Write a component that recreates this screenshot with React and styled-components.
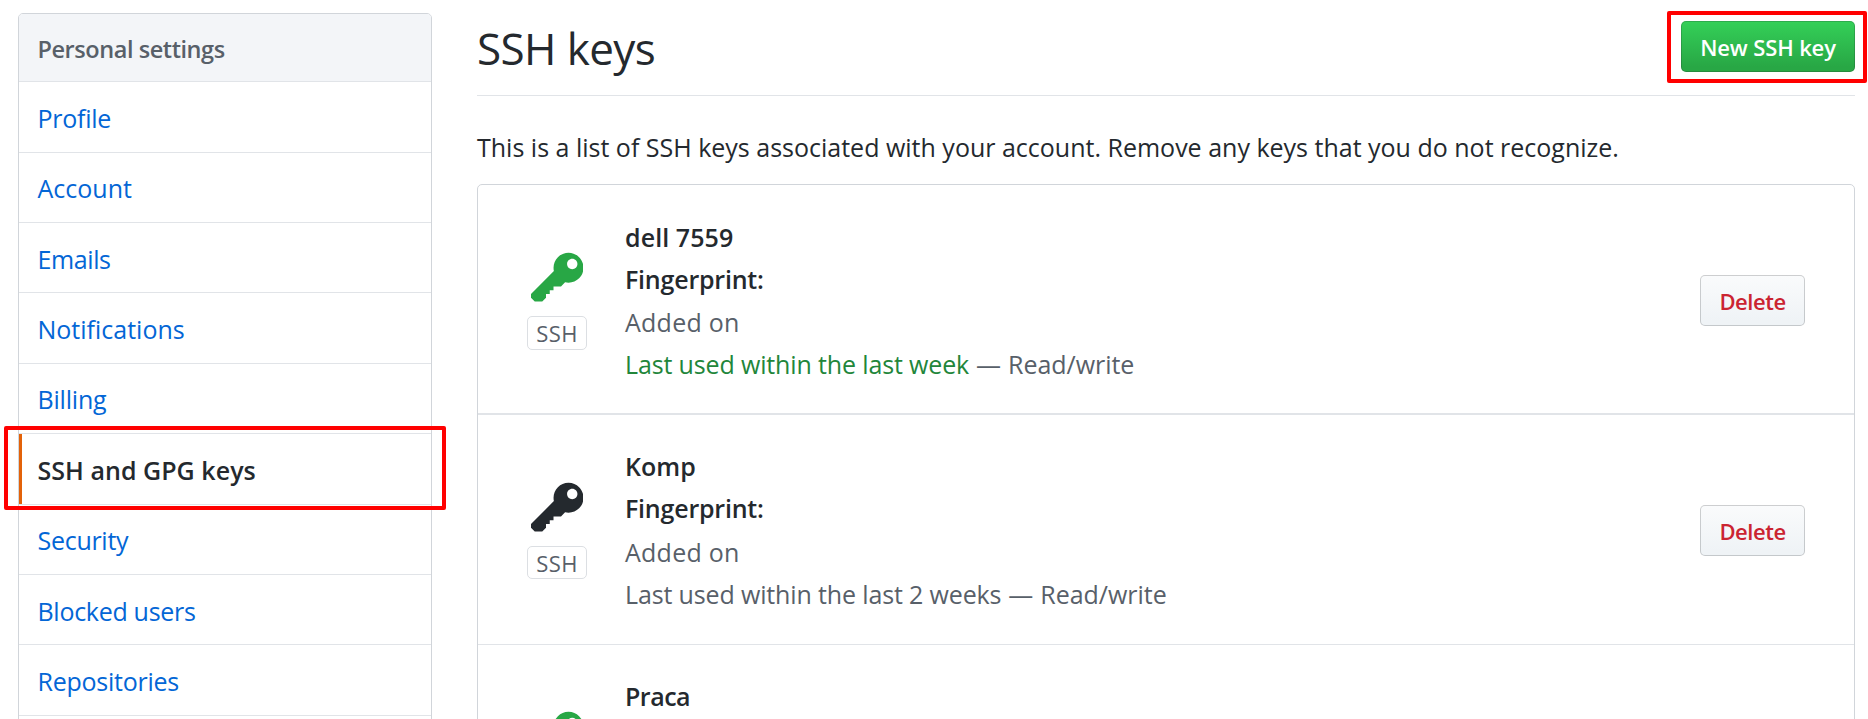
import React from "react";
import styled, { createGlobalStyle, css } from "styled-components";

const GlobalStyle = createGlobalStyle`
  *, *::before, *::after { box-sizing: border-box; }
  html, body { margin: 0; height: 719px; overflow: hidden; background: #fff; }
  body {
    font-family: "Open Sans", "Noto Sans", sans-serif;
    font-size: 25px;
    color: #24292e;
  }
`;

const Page = styled.div`
  display: flex;
  align-items: flex-start;
  gap: 45px;
  width: 1868px;
  height: 719px;
  padding: 13px 13px 0 18px;
  overflow: hidden;
`;

const Menu = styled.nav`
  flex: none;
  width: 414px;
  border: 1px solid #d1d5da;
  border-radius: 5px;
`;

const MenuHeading = styled.div`
  height: 68.2px;
  padding: 3px 0 0 18.5px;
  border-bottom: 1px solid #e1e4e8;
  border-radius: 4px 4px 0 0;
  background: #f3f5f8;
  color: #586069;
  font-size: 23.5px;
  font-weight: 600;
  letter-spacing: -0.44px;
  line-height: 64px;
`;

const highlightFrame = css`
  content: "";
  position: absolute;
  border: 4px solid #ff0000;
  border-radius: 2px;
  pointer-events: none;
`;

const MenuItem = styled.a`
  display: block;
  position: relative;
  height: 70.4px;
  padding: 1.6px 0 0 18.5px;
  border-bottom: 1px solid #e1e4e8;
  color: #0366d6;
  text-decoration: none;
  line-height: 68px;
  letter-spacing: ${(p) => p.$tracking}px;

  ${(p) =>
    p.$selected &&
    css`
      color: #24292e;
      font-weight: 600;

      &::before {
        content: "";
        position: absolute;
        inset: 0 auto 0 0;
        width: 3px;
        background: #e36209;
      }

      &::after {
        ${highlightFrame}
        inset: -8px -15px -6.6px;
      }
    `}
`;

const Main = styled.main`
  flex: 1;
  min-width: 0;
`;

const Subhead = styled.header`
  display: flex;
  justify-content: space-between;
  align-items: flex-start;
  height: 83px;
  padding-top: 8px;
  border-bottom: 1px solid #e1e4e8;
`;

const Title = styled.h1`
  margin: 0;
  font-size: 44px;
  font-weight: 400;
  line-height: 54px;
  letter-spacing: -0.6px;
`;

const ButtonHighlight = styled.div`
  position: relative;

  &::after {
    ${highlightFrame}
    inset: -10px -12px -11px -14px;
  }
`;

const Button = styled.button`
  display: block;
  height: 51px;
  padding: 0;
  border: 1px solid rgba(27, 31, 35, 0.2);
  border-radius: 5px;
  font-family: inherit;
  font-size: 22px;
  font-weight: 600;
  line-height: 48px;
  text-align: center;
`;

const PrimaryButton = styled(Button)`
  width: 174px;
  color: #fff;
  letter-spacing: -0.13px;
  background: linear-gradient(#34d058, #28a745 90%) border-box;
`;

const DangerButton = styled(Button)`
  flex: none;
  width: 105px;
  margin-top: 90px;
  color: #cb2431;
  letter-spacing: -0.46px;
  background: linear-gradient(#fafbfc, #eff3f6 90%) border-box;
`;

const Intro = styled.p`
  margin: 30px 0 16px;
  line-height: 42px;
`;

const KeyList = styled.ul`
  margin: 0;
  padding: 0;
  list-style: none;
  border: 1px solid #d1d5da;
  border-radius: 5px;
`;

const KeyRow = styled.li`
  display: flex;
  align-items: flex-start;
  height: 230px;
  padding: 0 49px;
  border-bottom: ${(p) => p.$rule}px solid #e1e4e8;
`;

const KeyMark = styled.div`
  display: flex;
  flex-direction: column;
  align-items: center;
  flex: none;
  width: 60px;
  margin-right: 38px;
  padding-top: ${(p) => p.$top}px;
  color: ${(p) => (p.$recent ? "#28a745" : "#24292e")};
`;

const KeyGlyph = styled.svg`
  display: block;
  width: 52.5px;
  height: 60px;
  fill: currentColor;
`;

const KeyBadge = styled.span`
  width: 60px;
  height: ${(p) => p.$height}px;
  margin-top: 7px;
  border: 1px solid #dcdfe3;
  border-radius: 5px;
  color: #586069;
  font-size: 22px;
  line-height: 32px;
  letter-spacing: 0.4px;
  text-align: center;
`;

const KeyDetails = styled.div`
  flex: 1;
  padding-top: ${(p) => p.$top}px;
  line-height: 42px;
`;

const KeyName = styled.strong`
  display: block;
  font-weight: 600;
  letter-spacing: ${(p) => p.$tracking}px;
`;

const Fingerprint = styled(KeyName)`
  letter-spacing: -0.21px;
`;

const Added = styled.div`
  margin-top: ${(p) => p.$gap}px;
  color: #586069;
  letter-spacing: 0.25px;
`;

const Usage = styled.div`
  color: #586069;
  letter-spacing: -0.03px;
  word-spacing: 0.5px;
`;

const LastUsed = styled.span`
  color: ${(p) => (p.$recent ? "#22863a" : "inherit")};
  letter-spacing: -0.14px;
  word-spacing: 0;
`;

const menuItems = [
  { label: "Profile", tracking: -0.25 },
  { label: "Account", tracking: 0 },
  { label: "Emails", tracking: -0.4 },
  { label: "Notifications", tracking: 0 },
  { label: "Billing", tracking: -0.2 },
  { label: "SSH and GPG keys", tracking: 0.04, selected: true },
  { label: "Security", tracking: -0.28 },
  { label: "Blocked users", tracking: -0.29 },
  { label: "Repositories", tracking: -0.25 },
];

const keys = [
  { name: "dell 7559", tracking: 0.09, used: "Last used within the last week", recent: true, rule: 2, badge: 34, markTop: 64, textTop: 31.2, gap: 1 },
  { name: "Komp", tracking: 0.02, used: "Last used within the last 2 weeks", recent: false, rule: 1, badge: 33, markTop: 64, textTop: 30.2, gap: 2 },
  { name: "Praca", tracking: -0.5, used: "Last used within the last week", recent: true, rule: 1, badge: 34, markTop: 63, textTop: 30.2, gap: 1 },
];

function KeyIcon() {
  return (
    <KeyGlyph viewBox="0 0 14 16" aria-hidden="true">
      <path
        fillRule="evenodd"
        d="M12.83 2.17C12.08 1.42 11.14 1.03 10 1c-1.13.03-2.08.42-2.83 1.17S6.04 3.86 6.01 5c0 .3.03.59.09.89L0 12v1l1 1h2l1-1v-1h1v-1h1v-1h2l1.09-1.11c.3.08.59.11.91.11 1.14-.03 2.08-.42 2.83-1.17S13.97 6.14 14 5c-.03-1.14-.42-2.08-1.17-2.83zM11 5.38c-.77 0-1.38-.61-1.38-1.38 0-.77.61-1.38 1.38-1.38.77 0 1.38.61 1.38 1.38 0 .77-.61 1.38-1.38 1.38z"
      />
    </KeyGlyph>
  );
}

export default function App() {
  return (
    <>
      <GlobalStyle />
      <Page>
        <Menu>
          <MenuHeading>Personal settings</MenuHeading>
          {menuItems.map((item) => (
            <MenuItem key={item.label} $tracking={item.tracking} $selected={item.selected}>
              {item.label}
            </MenuItem>
          ))}
          <MenuItem $tracking={0} />
        </Menu>
        <Main>
          <Subhead>
            <Title>SSH keys</Title>
            <ButtonHighlight>
              <PrimaryButton>New SSH key</PrimaryButton>
            </ButtonHighlight>
          </Subhead>
          <Intro>
            This is a list of SSH keys associated with your account. Remove any keys that you do not recognize.
          </Intro>
          <KeyList>
            {keys.map((k) => (
              <KeyRow key={k.name} $rule={k.rule}>
                <KeyMark $recent={k.recent} $top={k.markTop}>
                  <KeyIcon />
                  <KeyBadge $height={k.badge}>SSH</KeyBadge>
                </KeyMark>
                <KeyDetails $top={k.textTop}>
                  <KeyName $tracking={k.tracking}>{k.name}</KeyName>
                  <Fingerprint>Fingerprint:</Fingerprint>
                  <Added $gap={k.gap}>Added on</Added>
                  <Usage>
                    <LastUsed $recent={k.recent}>{k.used}</LastUsed> — Read/write
                  </Usage>
                </KeyDetails>
                <DangerButton>Delete</DangerButton>
              </KeyRow>
            ))}
          </KeyList>
        </Main>
      </Page>
    </>
  );
}
